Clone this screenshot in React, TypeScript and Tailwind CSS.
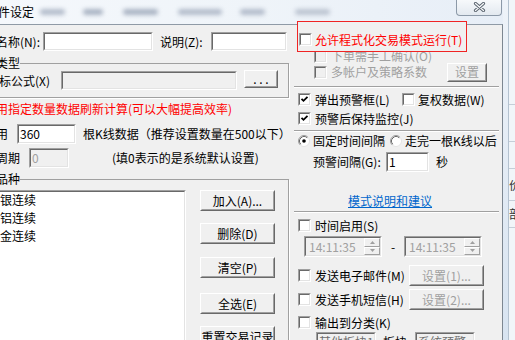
import React from "react";

type P = { className?: string; children?: React.ReactNode };

const Check = ({ checked = false, disabled = false }: { checked?: boolean; disabled?: boolean }) => (
  <span className="block w-[13px] h-[13px] shrink-0 border border-t-[#a0a0a0] border-l-[#a0a0a0] border-b-white border-r-white">
    <span
      className={`block w-full h-full border border-t-[#696969] border-l-[#696969] border-b-[#e3e3e3] border-r-[#e3e3e3] ${
        disabled ? "bg-[#f0f0f0]" : "bg-white"
      }`}
    >
      {checked && (
        <svg width="9" height="9" viewBox="0 0 9 9" className="block">
          <path d="M1.5 3.8 L3.5 5.8 L7.5 1.8" fill="none" stroke="#000" strokeWidth="1.8" />
        </svg>
      )}
    </span>
  </span>
);

const Radio = ({ on = false }: { on?: boolean }) => (
  <svg width="12" height="12" viewBox="0 0 12 12" className="block shrink-0">
    <circle cx="6" cy="6" r="5.5" fill="#fff" stroke="#e3e3e3" />
    <path d="M2.11 9.89 A5.5 5.5 0 0 1 9.89 2.11" fill="none" stroke="#a0a0a0" />
    <path d="M2.82 9.18 A4.5 4.5 0 0 1 9.18 2.82" fill="none" stroke="#696969" />
    {on && <circle cx="6" cy="6" r="1.8" fill="#000" />}
  </svg>
);

const Field = ({ className = "", inner = "bg-white", children }: P & { inner?: string }) => (
  <div className={`shrink-0 border border-t-[#a0a0a0] border-l-[#a0a0a0] border-b-white border-r-white ${className}`}>
    <div
      className={`h-full flex items-center pl-[1px] overflow-hidden whitespace-nowrap border border-t-[#696969] border-l-[#696969] border-b-[#e3e3e3] border-r-[#e3e3e3] ${inner}`}
    >
      {children}
    </div>
  </div>
);

const Btn = ({ className = "", children, dim = false }: P & { dim?: boolean }) => (
  <div className={`shrink-0 border border-t-white border-l-white border-b-[#696969] border-r-[#696969] bg-[#f0f0f0] ${className}`}>
    <div
      className={`h-full flex items-center justify-center whitespace-nowrap border border-t-[#f0f0f0] border-l-[#f0f0f0] border-b-[#a0a0a0] border-r-[#a0a0a0] ${
        dim ? "text-[#a0a0a0]" : ""
      }`}
    >
      {children}
    </div>
  </div>
);

const Sep = ({ className = "" }: P) => (
  <div className={`ml-[2px] w-[205px] h-[2px] shrink-0 border-t border-t-[#a0a0a0] bg-white ${className}`} />
);

const Spin = () => (
  <div className="ml-auto w-[16px] h-full flex flex-col">
    {[0, 1].map((i) => (
      <div key={i} className="flex-1 flex items-center justify-center border border-t-white border-l-white border-b-[#a0a0a0] border-r-[#a0a0a0] bg-[#f0f0f0]">
        <svg width="5" height="3" viewBox="0 0 5 3">
          <path d={i === 0 ? "M0 3 L2.5 0 L5 3Z" : "M0 0 L2.5 3 L5 0Z"} fill="#a0a0a0" />
        </svg>
      </div>
    ))}
  </div>
);

const TitleBar = () => (
  <div className="h-[24px] shrink-0 flex items-start bg-linear-to-r from-[#f5f8fc] via-[#eff4f9] to-[#e7eef7]">
    <div className="mt-[4px] -ml-[14px] leading-[15px] whitespace-nowrap">条件设定</div>
    <div className="mt-[9px] flex items-center">
      <div className="ml-[6px] w-[25px] h-[6px] rounded-full bg-[#b3bccb] blur-[2px]" />
      <div className="ml-[18px] w-[20px] h-[6px] rounded-full bg-[#a9b3c3] blur-[2px]" />
      <div className="ml-[20px] w-[35px] h-[6px] rounded-full bg-[#a9b3c3] blur-[2px]" />
      <div className="ml-[20px] w-[44px] h-[6px] rounded-full bg-[#b3bccb] blur-[2px]" />
      <div className="ml-[18px] w-[25px] h-[6px] rounded-full bg-[#b3bccb] blur-[2px]" />
      <div className="ml-[30px] w-[35px] h-[6px] rounded-full bg-[#bcc4d1] blur-[2px]" />
    </div>
    <div className="ml-auto mr-[1px] -mt-[1px] w-[46px] h-[17px] rounded-b-[4px] border border-t-0 border-[#8c99a8] bg-linear-to-b from-[#f8fafc] to-[#e3e9f0] flex items-center justify-center">
      <svg width="13" height="10" viewBox="0 0 13 10">
        <path d="M2.5 1.5 L10.5 8.5 M10.5 1.5 L2.5 8.5" stroke="#59636e" strokeWidth="3.2" strokeLinecap="round" />
        <path d="M2.5 1.5 L10.5 8.5 M10.5 1.5 L2.5 8.5" stroke="#f4f6f8" strokeWidth="1.3" strokeLinecap="round" />
      </svg>
    </div>
  </div>
);

const Left = () => (
  <div className="w-[292px] shrink-0 overflow-hidden flex flex-col">
    <div className="mt-[7px] h-[19px] shrink-0 flex items-center">
      <div className="w-[40px] flex justify-end whitespace-nowrap">
        <span>条件名称(N):</span>
      </div>
      <Field className="ml-[3px] w-[110px] h-[19px]" />
      <span className="ml-[7px] w-[48px] whitespace-nowrap">说明(Z):</span>
      <Field className="ml-[3px] w-[76px] h-[19px]" />
    </div>

    <fieldset className="mt-[5px] -ml-[30px] w-[319px] shrink-0 border border-[#a0a0a0] pb-[7px] shadow-[1px_1px_0_#fff]">
      <legend className="ml-[25px] leading-[14px]">类型</legend>
      <div className="h-[20px] flex items-start">
        <div className="w-[79px] mt-[4px] flex justify-end whitespace-nowrap">
          <span>指标公式(X)</span>
        </div>
        <Field className="ml-[11px] mt-[1px] w-[176px] h-[19px]" inner="bg-[#f0f0f0]" />
        <Btn className="ml-[7px] w-[34px] h-[18px]">. . .</Btn>
      </div>
    </fieldset>

    <div className="mt-[4px] -ml-[16px] shrink-0 whitespace-nowrap text-[#ff0000]">
      使用指定数量数据刷新计算(可以大幅提高效率)
    </div>

    <div className="mt-[8px] h-[20px] shrink-0 flex items-center">
      <div className="w-[8px] flex justify-end whitespace-nowrap">
        <span>使用</span>
      </div>
      <Field className="ml-[9px] w-[59px] h-[20px]">360</Field>
      <span className="ml-[7px] whitespace-nowrap">根K线数据（推荐设置数量在500以下）</span>
    </div>

    <div className="mt-[4px] h-[20px] shrink-0 flex items-center">
      <div className="w-[20px] flex justify-end whitespace-nowrap">
        <span>分析周期</span>
      </div>
      <Field className="ml-[9px] w-[40px] h-[20px]" inner="bg-[#f0f0f0] text-[#a0a0a0]">
        0
      </Field>
      <span className="ml-[43px] whitespace-nowrap">(填0表示的是系统默认设置)</span>
    </div>

    <fieldset className="mt-[4px] -ml-[30px] w-[319px] shrink-0 border border-[#a0a0a0] pb-[10px] shadow-[1px_1px_0_#fff]">
      <legend className="ml-[25px] leading-[14px]">品种</legend>
      <div className="flex items-start">
        <div className="mt-[4px] w-[215px] h-[170px] shrink-0 border border-t-[#a0a0a0] border-l-[#a0a0a0] border-b-white border-r-white">
          <div className="h-full pl-[27px] flex flex-col bg-white border border-t-[#696969] border-l-[#696969] border-b-[#e3e3e3] border-r-[#e3e3e3]">
            {["银连续", "铝连续", "金连续"].map((t) => (
              <div key={t} className="h-[18px] leading-[16px] whitespace-nowrap">
                {t}
              </div>
            ))}
          </div>
        </div>
        <div className="ml-[14px] mt-[4px] flex flex-col">
          <Btn className="w-[75px] h-[21px]">加入(A)...</Btn>
          <Btn className="mt-[12px] w-[75px] h-[21px]">删除(D)</Btn>
          <Btn className="mt-[13px] w-[75px] h-[21px]">清空(P)</Btn>
          <Btn className="mt-[15px] w-[75px] h-[21px]">全选(E)</Btn>
          <Btn className="mt-[12px] w-[75px] h-[21px]">重置交易记录</Btn>
        </div>
      </div>
    </fieldset>
  </div>
);

const Right = () => (
  <div className="w-[210px] shrink-0 flex flex-col">
    <div className="relative z-10 -mt-[4px] ml-[5px] w-[170px] h-[31px] shrink-0 border border-[#f02424] bg-[#f0f0f0] pt-[11px] pl-[1px]">
      <div className="h-[13px] flex items-center gap-[3px]">
        <Check />
        <span className="text-[#ff0000] whitespace-nowrap">允许程式化交易模式运行(T)</span>
      </div>
    </div>
    <div className="-mt-[3px] h-[14px] shrink-0 pl-[22px] flex items-center gap-[4px] text-[#a0a0a0]">
      <Check disabled />
      <span className="whitespace-nowrap">下单需手工确认(O)</span>
    </div>
    <div className="-mt-[1px] h-[20px] shrink-0 pl-[22px] flex items-center">
      <Check disabled />
      <span className="ml-[4px] w-[116px] whitespace-nowrap text-[#a0a0a0]">多帐户及策略系数</span>
      <Btn className="w-[40px] h-[19px]" dim>
        设置
      </Btn>
    </div>
    <Sep className="mt-[4px]" />

    <div className="mt-[5px] h-[13px] shrink-0 pl-[6px] flex items-center">
      <Check checked />
      <span className="ml-[4px] w-[87px] whitespace-nowrap">弹出预警框(L)</span>
      <Check />
      <span className="ml-[3px] whitespace-nowrap">复权数据(W)</span>
    </div>
    <div className="mt-[6px] h-[13px] shrink-0 pl-[6px] flex items-center">
      <Check checked />
      <span className="ml-[4px] whitespace-nowrap">预警后保持监控(J)</span>
    </div>
    <Sep className="mt-[5px]" />

    <div className="mt-[3px] h-[12px] shrink-0 pl-[6px] flex items-center">
      <Radio on />
      <span className="ml-[3px] w-[77px] whitespace-nowrap">固定时间间隔</span>
      <Radio />
      <span className="ml-[3px] whitespace-nowrap">走完一根K线以后</span>
    </div>
    <div className="mt-[5px] h-[20px] shrink-0 pl-[21px] flex items-center">
      <span className="w-[73px] whitespace-nowrap">预警间隔(G):</span>
      <Field className="w-[43px] h-[20px]">1</Field>
      <span className="ml-[7px]">秒</span>
    </div>
    <div className="mt-[22px] h-[14px] shrink-0 pl-[56px] whitespace-nowrap">
      <span className="text-[#0066cc] underline">模式说明和建议</span>
    </div>
    <Sep className="mt-[3px]" />

    <div className="mt-[6px] h-[13px] shrink-0 pl-[6px] flex items-center">
      <Check />
      <span className="ml-[4px] whitespace-nowrap">时间启用(S)</span>
    </div>
    <div className="mt-[4px] h-[21px] shrink-0 pl-[12px] flex items-center">
      <Field className="w-[78px] h-[21px]" inner="bg-[#f0f0f0] text-[#a0a0a0]">
        <span className="pl-[2px]">14:11:35</span>
        <Spin />
      </Field>
      <span className="w-[22px] text-center">-</span>
      <Field className="w-[78px] h-[21px]" inner="bg-[#f0f0f0] text-[#a0a0a0]">
        <span className="pl-[2px]">14:11:35</span>
        <Spin />
      </Field>
    </div>

    <div className="mt-[8px] h-[21px] shrink-0 pl-[6px] flex items-center">
      <Check />
      <span className="ml-[4px] w-[94px] whitespace-nowrap">发送电子邮件(M)</span>
      <Btn className="w-[75px] h-[21px]" dim>
        设置(1)...
      </Btn>
    </div>
    <div className="mt-[3px] h-[21px] shrink-0 pl-[6px] flex items-center">
      <Check />
      <span className="ml-[4px] w-[94px] whitespace-nowrap">发送手机短信(H)</span>
      <Btn className="w-[75px] h-[21px]" dim>
        设置(2)...
      </Btn>
    </div>
    <div className="mt-[6px] h-[13px] shrink-0 pl-[6px] flex items-center">
      <Check />
      <span className="ml-[4px] whitespace-nowrap">输出到分类(K)</span>
    </div>
    <div className="mt-[3px] h-[20px] shrink-0 pl-[24px] flex items-center">
      <Field className="w-[60px] h-[20px]" inner="bg-[#f0f0f0] text-[#6d6d6d]">
        其他板块1
      </Field>
      <span className="ml-[7px] w-[32px] whitespace-nowrap">板块</span>
      <Field className="w-[60px] h-[20px]" inner="bg-[#f0f0f0] text-[#6d6d6d]">
        系统预警
      </Field>
    </div>
  </div>
);

const Strip = () => (
  <div className="w-[12px] h-full shrink-0 flex">
    <div className="w-[5px] h-full bg-linear-to-b from-[#eef3f9] to-[#d8e4f1]" />
    <div className="w-[7px] h-full flex flex-col overflow-hidden border-l border-l-[#b4c2d0] bg-[#f1f5f9] text-[#333]">
      <div className="mt-[104px] h-px shrink-0 bg-[#c5ced8]" />
      <div className="mt-[36px] h-px shrink-0 bg-[#c5ced8]" />
      <div className="mt-[26px] h-px shrink-0 bg-[#c5ced8]" />
      <div className="mt-[9px] leading-[14px] whitespace-nowrap">价</div>
      <div className="mt-[8px] h-px shrink-0 bg-[#c5ced8]" />
      <div className="mt-[6px] leading-[14px] whitespace-nowrap">部</div>
      <div className="mt-[6px] h-px shrink-0 bg-[#c5ced8]" />
    </div>
  </div>
);

export default function App() {
  return (
    <div className="w-[515px] h-[340px] overflow-hidden flex bg-[#dde8f4] text-[12px] leading-[14px] text-black font-[family-name:Noto_Sans_CJK_SC,sans-serif]">
      <div className="w-[503px] h-full shrink-0 flex flex-col">
        <TitleBar />
        <div className="flex-1 min-h-0 flex border-t border-t-[#8f9aa6] border-r border-r-[#7d8791] bg-[#f0f0f0]">
          <Left />
          <Right />
        </div>
      </div>
      <Strip />
    </div>
  );
}
